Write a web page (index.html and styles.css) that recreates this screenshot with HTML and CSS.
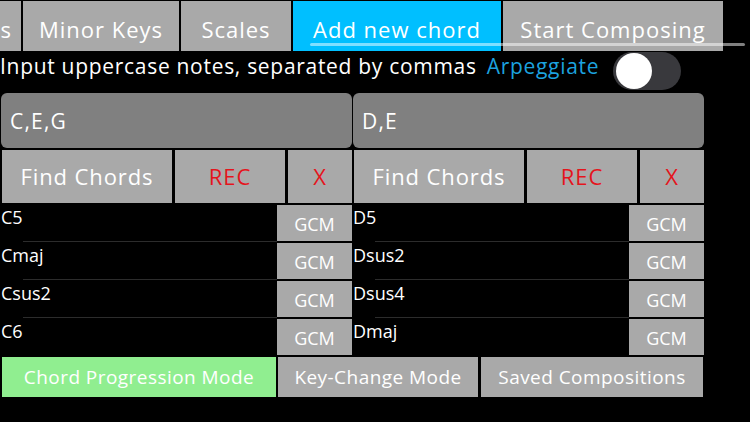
FILE: index.html
```html
<!DOCTYPE html>
<html>
<head>
<meta charset="utf-8">
<link rel="stylesheet" href="styles.css">
</head>
<body>
<div class="app">
  <div class="tabbar">
    <div class="tab tab-cut"><span>Major Keys</span></div>
    <div class="tab tab-minor">Minor Keys</div>
    <div class="tab tab-scales">Scales</div>
    <div class="tab tab-add active">Add new chord</div>
    <div class="tab tab-start">Start Composing</div>
  </div>
  <div class="scroll-indicator"></div>

  <div class="hint-row">
    <span class="hint">Input uppercase notes, separated by commas</span>
    <span class="arp">Arpeggiate</span>
    <div class="switch"><div class="knob"></div></div>
  </div>

  <div class="columns">
    <div class="col">
      <div class="input">C,E,G</div>
      <div class="btn-row">
        <div class="btn btn-find">Find Chords</div>
        <div class="btn btn-rec red">REC</div>
        <div class="btn btn-x red">X</div>
      </div>
      <div class="list">
        <div class="row"><div class="label">C5</div><div class="gcm">GCM</div></div>
        <div class="row"><div class="label">Cmaj</div><div class="gcm">GCM</div></div>
        <div class="row"><div class="label">Csus2</div><div class="gcm">GCM</div></div>
        <div class="row"><div class="label">C6</div><div class="gcm">GCM</div></div>
      </div>
    </div>
    <div class="col">
      <div class="input">D,E</div>
      <div class="btn-row">
        <div class="btn btn-find">Find Chords</div>
        <div class="btn btn-rec red">REC</div>
        <div class="btn btn-x red">X</div>
      </div>
      <div class="list">
        <div class="row"><div class="label">D5</div><div class="gcm">GCM</div></div>
        <div class="row"><div class="label">Dsus2</div><div class="gcm">GCM</div></div>
        <div class="row"><div class="label">Dsus4</div><div class="gcm">GCM</div></div>
        <div class="row"><div class="label">Dmaj</div><div class="gcm">GCM</div></div>
      </div>
    </div>
  </div>

  <div class="modes">
    <div class="mode mode-chord">Chord Progression Mode</div>
    <div class="mode mode-key">Key-Change Mode</div>
    <div class="mode mode-saved">Saved Compositions</div>
  </div>
</div>
</body>
</html>
```
FILE: styles.css
```css
html, body {
  margin: 0;
  padding: 0;
  background: #000;
}
body {
  font-family: "Open Sans", "Noto Sans", sans-serif;
  color: #fff;
}
.app {
  position: relative;
  width: 750px;
  height: 422px;
  overflow: hidden;
  background: #000;
}

/* tabs */
.tabbar {
  display: flex;
  gap: 2px;
  margin-top: 1px;
  height: 50px;
}
.tab {
  flex: none;
  height: 50px;
  box-sizing: border-box;
  padding-top: 13px;
  background: #a9a9a9;
  font-size: 22px;
  letter-spacing: 1px;
  line-height: 30px;
  text-align: center;
  white-space: nowrap;
}
.tab.active { background: #00bfff; }
.tab-cut {
  width: 21px;
  display: flex;
  justify-content: flex-end;
  overflow: hidden;
  padding-right: 9px;
}
.tab-cut span { flex: none; }
.tab-minor { width: 156px; }
.tab-scales { width: 110px; }
.tab-add { width: 208px; }
.tab-start { width: 220px; }

.scroll-indicator {
  position: absolute;
  left: 310px;
  top: 43px;
  width: 435px;
  height: 3px;
  border-radius: 2px;
  background: rgba(255, 255, 255, 0.5);
}

/* hint row */
.hint-row {
  display: flex;
  align-items: flex-start;
  height: 41px;
}
.hint {
  font-size: 21px;
  letter-spacing: 0.7px;
  line-height: 28px;
  padding-top: 1px;
  white-space: nowrap;
}
.arp {
  font-size: 21px;
  letter-spacing: 0.7px;
  line-height: 28px;
  padding-top: 1px;
  margin-left: 10px;
  color: #1ca2df;
  white-space: nowrap;
}
.switch {
  margin-left: 14px;
  margin-top: 1px;
  width: 68px;
  height: 38px;
  border-radius: 19px;
  background: #39393d;
  box-sizing: border-box;
  padding: 1px 3px;
}
.knob {
  width: 36px;
  height: 36px;
  border-radius: 50%;
  background: #fff;
}

/* columns */
.columns {
  display: flex;
  gap: 1px;
  margin-left: 1px;
  margin-top: 1px;
}
.col {
  width: 351px;
  display: flex;
  flex-direction: column;
}
.input {
  height: 55px;
  border-radius: 6px;
  background: #808080;
  box-sizing: border-box;
  padding-left: 9px;
  display: flex;
  align-items: center;
  font-size: 21px;
  letter-spacing: 1.2px;
}
.btn-row {
  display: flex;
  gap: 3px;
  margin-top: 2px;
  height: 53px;
}
.btn {
  background: #a9a9a9;
  display: flex;
  align-items: center;
  justify-content: center;
  padding-bottom: 2px;
  box-sizing: border-box;
  font-size: 22px;
  letter-spacing: 0.9px;
}
.btn-find { width: 170px; margin-left: 1px; }
.btn-rec { width: 110px; }
.btn-x { flex: 1; }
.red { color: #e5141c; }

.list {
  margin-top: 1px;
  display: flex;
  flex-direction: column;
}
.row {
  display: flex;
  height: 38px;
}
.label {
  flex: 1;
  font-size: 18px;
  line-height: 24px;
  padding-top: 1px;
}
.row:not(:last-child) .label {
  background: linear-gradient(#2c2c2c, #2c2c2c) no-repeat right bottom / calc(100% - 22px) 1px;
}
.gcm {
  width: 75px;
  height: 36px;
  margin-top: 1px;
  background: #a9a9a9;
  display: flex;
  align-items: center;
  justify-content: center;
  box-sizing: border-box;
  padding-top: 2px;
  font-size: 18px;
}

/* modes */
.modes {
  display: flex;
  gap: 2px;
  margin-left: 2px;
  margin-top: 1px;
  height: 40px;
}
.mode {
  background: #a9a9a9;
  display: flex;
  align-items: center;
  justify-content: center;
  font-size: 19px;
  letter-spacing: 0.45px;
  white-space: nowrap;
}
.mode-chord { width: 274px; background: #90ee90; }
.mode-key { width: 200px; }
.mode-saved { width: 222px; margin-left: 1px; }
```
